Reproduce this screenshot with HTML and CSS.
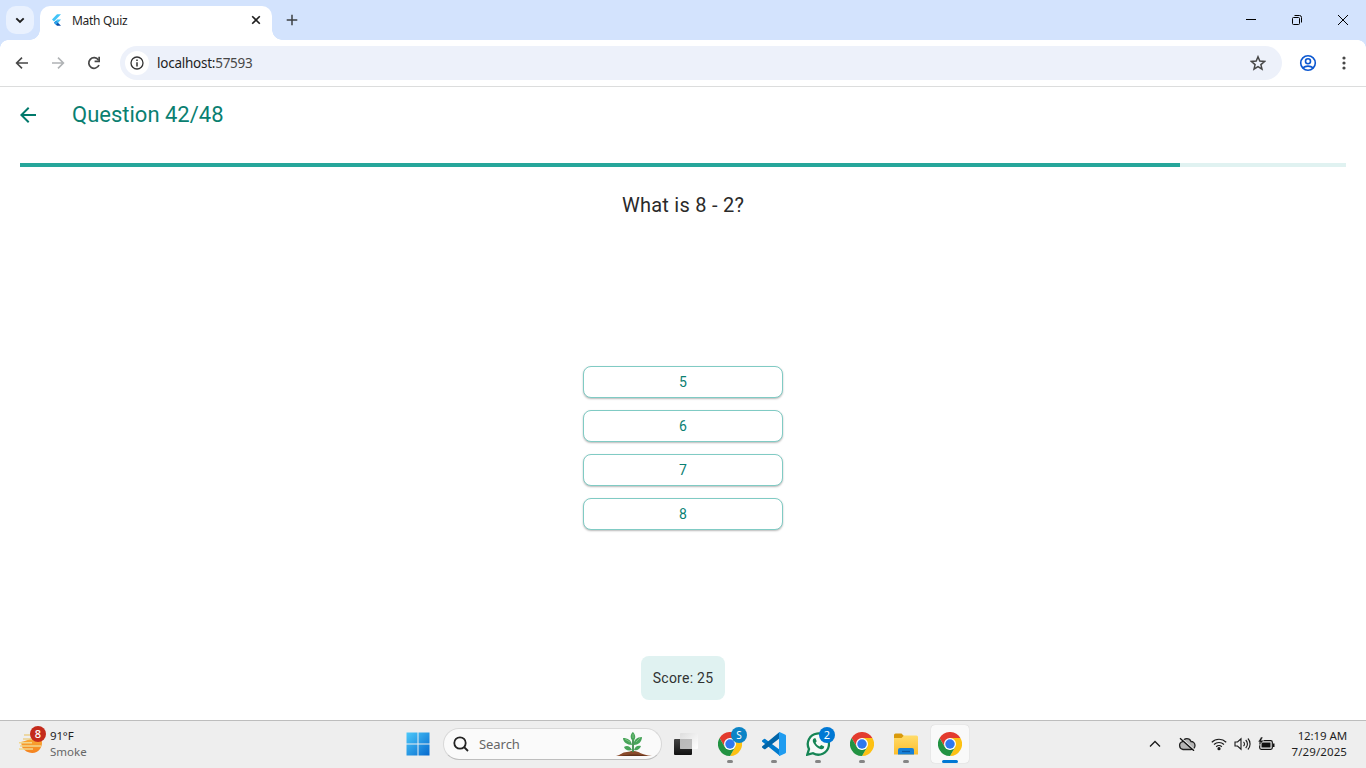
FILE: index.html
```html
<!DOCTYPE html>
<html lang="en">
<head>
<meta charset="utf-8">
<title>Math Quiz</title>
<link rel="stylesheet" href="styles.css">
</head>
<body>
<svg class="defs" width="0" height="0" aria-hidden="true">
  <defs>
    <linearGradient id="win" x1="0" y1="0" x2="1" y2="1"><stop offset="0" stop-color="#4cc9fa"/><stop offset="1" stop-color="#0669ce"/></linearGradient>
    <linearGradient id="folder" x1="0" y1="0" x2="0" y2="1"><stop offset="0" stop-color="#ffdc6a"/><stop offset="1" stop-color="#fdbd2c"/></linearGradient>
    <linearGradient id="sun" x1="0" y1="0" x2="0" y2="1"><stop offset="0" stop-color="#fbb53a"/><stop offset="1" stop-color="#f4811e"/></linearGradient>
    <linearGradient id="pane" x1="0" y1="0" x2="1" y2="1"><stop offset="0" stop-color="#dedede"/><stop offset="1" stop-color="#ffffff"/></linearGradient>
    <linearGradient id="dark" x1="0" y1="0" x2="0" y2="1"><stop offset="0" stop-color="#444"/><stop offset="1" stop-color="#111"/></linearGradient>
    <symbol id="chrome" viewBox="0 0 48 48">
      <path d="M24 12H44.800A24 24 0 0 1 24 48L34.400 30Z" fill="#fdc113"/>
      <path d="M3.200 12A24 24 0 0 1 44.800 12H24L13.600 30Z" fill="#e33b2e"/>
      <path d="M3.200 12L13.600 30 24 36 34.400 30 24 48A24 24 0 0 1 3.200 12Z" fill="#229342"/>
      <circle cx="24" cy="24" r="12" fill="#fff"/><circle cx="24" cy="24" r="9.500" fill="#2f78ef"/>
    </symbol>
  </defs>
</svg>

<header class="tabstrip">
  <button class="tab-search" aria-label="Search tabs"><svg width="10" height="7" viewBox="0 0 10 7"><path d="M1.300 1.300L5 5 8.700 1.300" fill="none" stroke="#1f1f1f" stroke-width="1.900"/></svg></button>
  <div class="tab">
    <svg width="12" height="14" viewBox="0 0 12 14"><path d="M6 1.300h4L3 8.400l-2-2z" fill="#42c4f8"/><path d="M6 6.400h4L7 9.900 5 7.900z" fill="#42c4f8"/><path d="M3 9.800l2-2 5 5H6z" fill="#0b4da8"/><path d="M3 9.800l2-2 2 2-2 2z" fill="#29a5ee"/></svg>
    <span class="tab-title">Math Quiz</span>
    <svg class="tab-close" width="10" height="10" viewBox="0 0 10 10"><path d="M1.200 1.200l7.600 7.600M8.800 1.200L1.200 8.800" stroke="#1f1f1f" stroke-width="1.600"/></svg>
  </div>
  <svg class="new-tab" width="12" height="12" viewBox="0 0 12 12"><path d="M6 .7v10.600M.7 6h10.600" stroke="#3c4043" stroke-width="1.500"/></svg>
  <div class="window-controls">
    <svg width="12" height="12" viewBox="0 0 12 12"><path d="M1 5.500h10" stroke="#000"/></svg>
    <svg width="12" height="12" viewBox="0 0 12 12" fill="none" stroke="#000"><rect x="1.500" y="3.500" width="7" height="7" rx="1"/><path d="M3.500 1.500h5a2 2 0 0 1 2 2v5"/></svg>
    <svg width="12" height="12" viewBox="0 0 12 12"><path d="M1 1l10 10M11 1L1 11" stroke="#000"/></svg>
  </div>
</header>

<nav class="toolbar">
  <svg width="14" height="14" viewBox="0 0 14 14" fill="none" stroke="#474747" stroke-width="1.600"><path d="M13 7H2M7 1.600L1.600 7 7 12.400"/></svg>
  <svg width="14" height="14" viewBox="0 0 14 14" fill="none" stroke="#b0b3b5" stroke-width="1.600"><path d="M1 7h11M7 1.600L12.400 7 7 12.400"/></svg>
  <svg width="14" height="14" viewBox="0 0 14 14"><path d="M12 9A5.300 5.300 0 1 1 11.400 3.900" fill="none" stroke="#474747" stroke-width="1.700"/><path d="M13 .8v5.500H7.600V4.600h3.700V.8z" fill="#474747"/></svg>
  <div class="address">
    <span class="site-info"><svg width="14" height="14" viewBox="0 0 14 14"><circle cx="7" cy="7" r="6" fill="none" stroke="#333" stroke-width="1.300"/><path d="M7 6.200v4.200M7 3.600v1.500" stroke="#333" stroke-width="1.500"/></svg></span>
    <span class="url">localhost:<span class="port">57593</span></span>
    <svg class="star" width="16" height="16" viewBox="0 0 16 16"><path d="M8 1.800l1.800 4.300 4.700.4-3.600 3.100 1.100 4.600L8 11.700l-4 2.500 1.100-4.600-3.600-3.100 4.700-.4z" fill="none" stroke="#474747" stroke-width="1.500"/></svg>
  </div>
  <svg class="profile" width="18" height="18" viewBox="0 0 18 18" fill="none" stroke="#0b57d0" stroke-width="1.600"><circle cx="9" cy="9" r="7.300"/><circle cx="9" cy="7.200" r="2.500"/><path d="M3.800 13.800c2.800-2.300 7.600-2.300 10.400 0"/></svg>
  <svg class="menu" width="4" height="14" viewBox="0 0 4 14" fill="#474747"><circle cx="2" cy="2" r="1.600"/><circle cx="2" cy="7" r="1.600"/><circle cx="2" cy="12" r="1.600"/></svg>
</nav>

<main class="app">
  <div class="app-bar">
    <svg width="16" height="16" viewBox="0 0 16 16"><path d="M16 7H3.800l5.600-5.600L8 0 0 8l8 8 1.400-1.400L3.800 9H16z" fill="#00796b"/></svg>
    <h1 class="app-title">Question 42/48</h1>
  </div>
  <div class="progress"><div class="progress-value" style="width:87.5%"></div></div>
  <h2 class="question">What is 8 - 2?</h2>
  <div class="answers">
    <button class="answer">5</button>
    <button class="answer">6</button>
    <button class="answer">7</button>
    <button class="answer">8</button>
  </div>
  <div class="score">Score: 25</div>
</main>

<footer class="taskbar">
  <div class="weather">
    <span class="weather-icon">
      <svg width="24" height="22" viewBox="0 0 24 22"><path d="M2 9C7 8 12 6 15 2c8 1 10 8 6 14-4 6-14 5-18-2z" fill="url(#sun)"/><path d="M5 2h11M4 6h11" stroke="#ecd08c" stroke-width="1.700"/><path d="M0 9.700h13M1 13h21M0 16h14" stroke="#f2d68c" stroke-width="1.500"/></svg>
      <span class="badge badge-red">8</span>
    </span>
    <span class="weather-text"><span>91°F</span><span class="muted">Smoke</span></span>
  </div>
  <div class="apps">
    <div class="app-icon start"><svg width="24" height="24" viewBox="0 0 24 24"><path d="M.5.5h11v11H.5zM12.500.5h11v11h-11zM.5 12.500h11v11H.5zM12.500 12.500h11v11h-11z" fill="url(#win)"/></svg></div>
    <div class="search">
      <svg width="16" height="16" viewBox="0 0 16 16" fill="none" stroke="#222" stroke-width="1.800"><circle cx="7" cy="7" r="5.700"/><path d="M11 11l4 4"/></svg>
      <span class="search-text">Search</span>
      <svg class="plant" width="36" height="25" viewBox="0 0 36 25"><path d="M0 24c5-1 6-4 11-4 3 0 4-2 7-1 5 0 7 4 18 5z" fill="#8a4b2b"/><path d="M5 24c6-2 19-2 26 0z" fill="#63331c"/><path d="M17 20V6" stroke="#3d8b4c" stroke-width="1.800"/><path d="M17 9c-4-3-2-8 0-9 3 3 3 7 0 9zM16 13c-5 0-9-3-9-7 5 0 8 2 9 7zM18 13c-1-5 3-8 8-8 0 5-4 8-8 8zM16 18c-4 1-7 0-8-3 3-2 6-1 8 3zM18 18c1-4 4-5 7-4-1 3-4 5-7 4z" fill="#48a45a"/><path d="M17 6V2M14 10L9 7M20 10l4-4" stroke="#86c887" stroke-width=".8"/></svg>
    </div>
    <div class="app-icon view"><svg width="24" height="24" viewBox="0 0 24 24"><rect x="0" y="7" width="18" height="16" rx="1" fill="url(#dark)"/><rect x="6" y="1" width="18" height="16" rx="1" fill="url(#pane)"/><path d="M6 7h12v10H6z" fill="#aaa" opacity=".75"/></svg></div>
    <div class="app-icon running"><svg width="24" height="24"><use href="#chrome"/></svg><span class="badge badge-s">S</span></div>
    <div class="app-icon running"><svg width="24" height="24" viewBox="0 0 24 24"><path d="M.3 8.300L2 7a1 1 0 0 1 1.200 0L18 18v6L.3 9.800a1 1 0 0 1 0-1.500z" fill="#007acc"/><path d="M.3 14.200L17.500 0 18 6 3.200 17.200A1 1 0 0 1 2 17L.3 15.700a1 1 0 0 1 0-1.500z" fill="#0065a9"/><path d="M17.500 0L23 2.500a1.500 1.500 0 0 1 1 1.500v16a1.500 1.500 0 0 1-1 1.500L17.500 24c-.7-.3-.5-1-.5-1.500v-21C17 1 17 .3 17.500 0z" fill="#1f9cf0"/></svg></div>
    <div class="app-icon running"><svg width="24" height="24" viewBox="0 0 24 24"><path d="M1.300 22.700L3 17A10.600 10.600 0 1 1 7 21.200z" fill="#f7faf8" stroke="#168555" stroke-width="2.300"/><path d="M8.300 6.300c-1.800.8-2 3-.7 5 2 3.200 4.500 5.300 7.400 5.900 1.700.3 3.400-.9 3.200-2.600l-3-1.600-1.500 1.500c-2-.8-3.300-2-4.100-3.800l1.100-1.400-1.200-3z" fill="#168555"/></svg><span class="badge badge-blue">2</span></div>
    <div class="app-icon running"><svg width="24" height="24"><use href="#chrome"/></svg></div>
    <div class="app-icon running"><svg width="24" height="24" viewBox="0 0 24 24"><path d="M0 3a1.500 1.500 0 0 1 1.500-1.500h6L10 4v3H0z" fill="#d99a0b"/><path d="M0 6h7.500L10 3.500h12.500A1.500 1.500 0 0 1 24 5v17.500H0z" fill="url(#folder)"/><path d="M4 22.500V18a2 2 0 0 1 2-2h12a2 2 0 0 1 2 2v4.500z" fill="#1680d8"/><path d="M8 19.500h8" stroke="#0a58a3" stroke-width="1.300"/></svg></div>
    <div class="app-icon running active"><svg width="24" height="24"><use href="#chrome"/></svg></div>
  </div>
  <div class="tray">
    <svg class="chevron" width="12" height="8" viewBox="0 0 12 8"><path d="M1 6.500l5-5 5 5" fill="none" stroke="#1a1a1a" stroke-width="1.300"/></svg>
    <svg class="cloud" width="18" height="14" viewBox="0 0 18 14"><path d="M5 12.500a4 4 0 0 1-.5-7.800C6 .6 11.500.6 13 4.500a4 4 0 0 1 0 8z" fill="#b5b5b5" stroke="#222" stroke-width="1.300"/><path d="M3 1l14 12.500" stroke="#eee" stroke-width="1.500"/><path d="M2 1.200L16 13.800" stroke="#111" stroke-width="1.300"/></svg>
    <svg class="wifi" width="16" height="14" viewBox="0 0 16 14" fill="none" stroke="#1a1a1a" stroke-width="1.200"><path d="M.8 5.200a10.300 10.300 0 0 1 14.400 0M3 7.500a7.200 7.200 0 0 1 10 0M5.200 9.800a4 4 0 0 1 5.600 0"/><circle cx="8" cy="11.700" r="1" fill="#1a1a1a"/></svg>
    <svg class="sound" width="18" height="14" viewBox="0 0 18 14" fill="none" stroke="#1a1a1a" stroke-width="1.100"><path d="M1 5h2.500L7 1.800v10.400L3.500 9H1zM9.500 4.800a3 3 0 0 1 0 4.400M11.700 3a5.500 5.500 0 0 1 0 8M13.900 1.500a8 8 0 0 1 0 11"/></svg>
    <svg class="battery" width="17" height="14" viewBox="0 0 17 14"><rect x="1.700" y="3.700" width="12.600" height="8.600" rx="1.500" fill="none" stroke="#111" stroke-width="1.200"/><path d="M3.500 5.500h9v5h-9zM15 6.500h1.500V10H15z" fill="#111"/><path d="M3 0L0 5h2.200L1.300 8.500 5.700 3.500H3.300L5 0z" fill="#111" stroke="#eee" stroke-width=".5"/></svg>
    <div class="clock"><span>12:19 AM</span><span class="date">7/29/2025</span></div>
  </div>
</footer>
</body>
</html>
```
FILE: styles.css
```css
* { box-sizing: border-box; }
body {
  margin: 0;
  width: 1366px;
  height: 768px;
  display: flex;
  flex-direction: column;
  overflow: hidden;
  background: #fff;
  font-family: "Noto Sans", sans-serif;
  color: #1f1f1f;
}
svg { display: block; flex: none; }
.defs { position: absolute; }
button { padding: 0; border: 0; background: none; font: inherit; }

.tabstrip {
  height: 40px;
  flex: none;
  display: flex;
  align-items: center;
  padding-left: 6px;
  background: #d3e3fd;
}
.tab-search {
  display: grid;
  place-items: center;
  width: 28px;
  height: 28px;
  border-radius: 10px;
  background: #e9f1fe;
}
.tab {
  position: relative;
  align-self: flex-end;
  display: flex;
  align-items: center;
  width: 232px;
  height: 34px;
  margin-left: 6px;
  padding: 0 11px 6px;
  border-radius: 10px 10px 0 0;
  background: #fff;
}
.tab::before, .tab::after {
  content: "";
  position: absolute;
  bottom: 0;
  width: 10px;
  height: 10px;
}
.tab::before { left: -10px; background: radial-gradient(circle at 0 0, transparent 9.500px, #fff 10px); }
.tab::after { right: -10px; background: radial-gradient(circle at 100% 0, transparent 9.500px, #fff 10px); }
.tab-title { margin-left: 9px; padding-top: 2px; font-size: 12px; letter-spacing: -.3px; line-height: 16px; }
.tab-close { margin-left: auto; }
.new-tab { margin-left: 14px; }
.window-controls { display: flex; gap: 34px; margin-left: auto; padding-right: 17px; }

.toolbar {
  position: relative;
  height: 47px;
  flex: none;
  display: flex;
  align-items: center;
  padding: 0 20px 0 15px;
  gap: 22px;
  border-bottom: 1px solid #dcdddd;
  background: #fff;
}
.toolbar::before {
  content: "";
  position: absolute;
  inset: 0 0 auto;
  height: 8px;
  background:
    radial-gradient(circle at 100% 100%, transparent 7.500px, #d3e3fd 8px) left / 8px 8px no-repeat,
    radial-gradient(circle at 0 100%, transparent 7.500px, #d3e3fd 8px) right / 8px 8px no-repeat;
}
.address {
  flex: 1;
  display: flex;
  align-items: center;
  height: 34px;
  margin-left: -3px;
  padding: 0 16px 0 5px;
  border-radius: 17px;
  background: #edf1fa;
}
.site-info { display: grid; place-items: center; width: 24px; height: 24px; border-radius: 50%; background: #fff; }
.url { margin-left: 8px; font-size: 13.500px; letter-spacing: -.25px; line-height: 18px; }
.port { color: #474747; }
.star { margin-left: auto; }
.profile { margin-left: -5px; }
.menu { margin-left: 3px; }

.app {
  flex: 1;
  display: flex;
  flex-direction: column;
  align-items: center;
  background: #fff;
  font-family: Roboto, sans-serif;
}
.app-bar { align-self: stretch; display: flex; align-items: center; height: 56px; padding-left: 20px; }
.app-title { margin: 0 0 0 36px; font-size: 22px; font-weight: 400; line-height: 28px; color: #0a7f71; }
.progress { width: 1326px; height: 4px; margin-top: 20px; background: #e0f2f1; }
.progress-value { height: 4px; background: #26a69a; }
.question { margin: 24px 0 0; font-size: 20px; font-weight: 400; line-height: 28px; letter-spacing: .25px; color: #2a2a2a; }
.answers { display: grid; gap: 12px; margin-top: 147px; }
.answer {
  width: 200px;
  height: 32px;
  border: 1px solid #80cbc4;
  border-radius: 8px;
  background: #fff;
  box-shadow: 0 1px 2px rgba(0, 0, 0, .28);
  color: #0a8072;
  font-size: 14px;
  line-height: 30px;
}
.score {
  width: 84px;
  height: 44px;
  margin-top: auto;
  margin-bottom: 20px;
  border-radius: 8px;
  background: #e0f2f1;
  font-size: 14px;
  line-height: 44px;
  letter-spacing: .25px;
  text-align: center;
  color: #303333;
}

.taskbar {
  height: 48px;
  flex: none;
  display: grid;
  grid-template-columns: 395px 1fr auto;
  padding-bottom: 1px;
  border-top: 1px solid #bdbdbd;
  background: #eee;
  font-size: 11px;
}
.weather { display: flex; align-items: center; padding-left: 19px; }
.weather-icon { position: relative; }
.weather-text, .clock { display: flex; flex-direction: column; line-height: 16px; }
.weather-text { margin-left: 7px; font-size: 11.500px; letter-spacing: -.15px; }
.weather-text .muted { letter-spacing: 0; }
.muted { color: #666; }
.badge {
  position: absolute;
  display: grid;
  place-items: center;
  width: 16px;
  height: 16px;
  border-radius: 50%;
  color: #fff;
  font-size: 11px;
  line-height: 16px;
}
.badge-red { left: 11px; top: -7px; background: #c42b1c; font-weight: 500; }
.badge-s, .badge-blue { right: 2px; top: 2px; background: #0078d4; }
.badge-s { background: #0b84c6; font-size: 10px; }
.apps { display: flex; align-items: center; }
.app-icon {
  position: relative;
  display: grid;
  place-items: center;
  width: 38px;
  height: 38px;
  margin: 0 3px;
}
.start svg { margin-left: 1px; }
.running::after {
  content: "";
  position: absolute;
  left: 16px;
  bottom: 0;
  width: 6px;
  height: 3px;
  border-radius: 2px;
  background: #858585;
}
.active { border-radius: 4px; background: #f9f9f9; box-shadow: 0 0 1px #bbb; }
.active::after { left: 11px; width: 16px; background: #0078d4; }
.search {
  display: flex;
  align-items: center;
  width: 219px;
  height: 32px;
  margin-left: 4px;
  padding: 0 9px 0 9px;
  border: 1px solid #d8d8d8;
  border-bottom-color: #bebebe;
  border-radius: 16px;
  background: #fafafa;
}
.search-text { margin-left: 10px; color: #666; font-size: 13px; letter-spacing: -.05px; }
.plant { margin-left: auto; }
.view { margin-left: 5px; }
.tray { display: flex; align-items: center; padding-right: 19px; }
.cloud { margin-left: 17px; }
.wifi { margin-left: 15px; }
.sound { margin-left: 7px; }
.battery { margin-left: 6px; }
.clock { width: 70px; margin-left: 2px; align-items: flex-end; font-size: 11.500px; letter-spacing: -.1px; }
.date { letter-spacing: .1px; }
```
